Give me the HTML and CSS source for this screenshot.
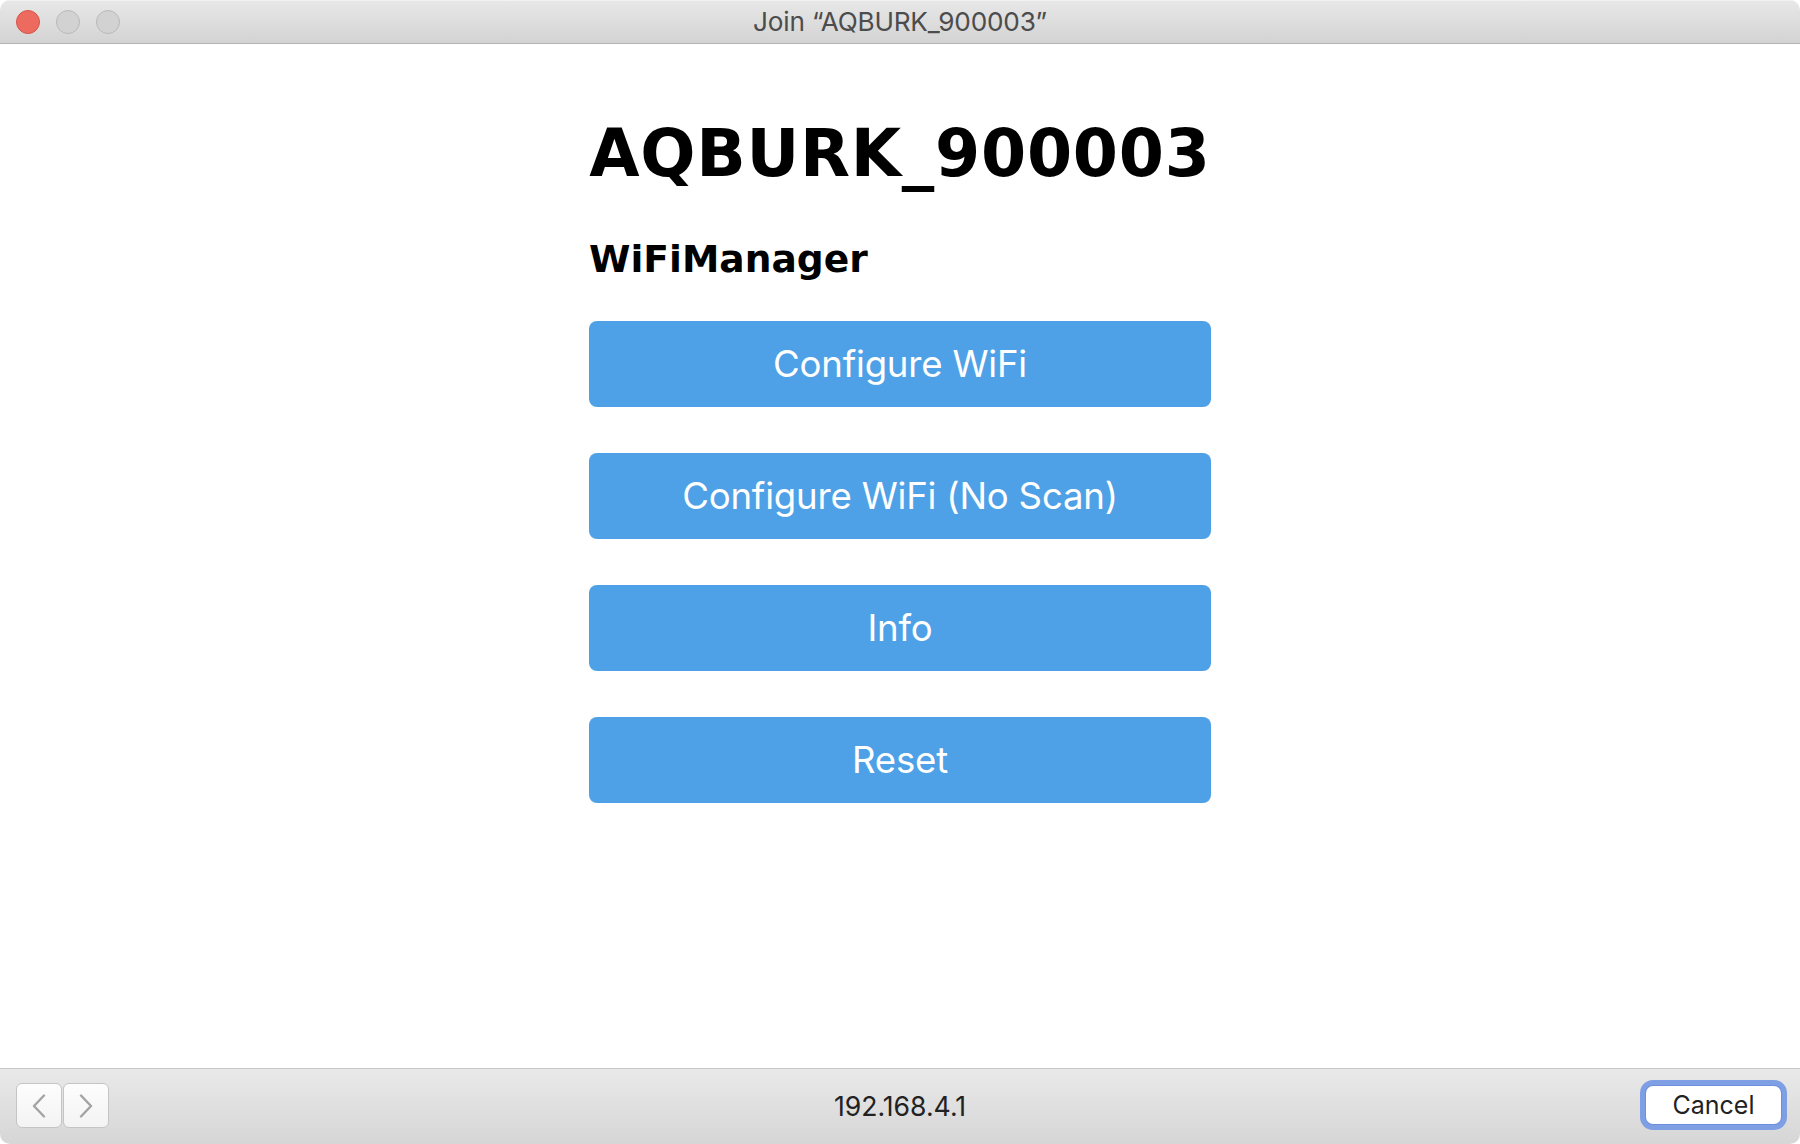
FILE: index.html
```html
<!DOCTYPE html>
<html lang="en">
<head>
<meta charset="utf-8">
<title>Join “AQBURK_900003”</title>
<link rel="stylesheet" href="styles.css">
</head>
<body>
<div class="window">
  <header class="titlebar">
    <div class="lights">
      <span class="light red"></span>
      <span class="light"></span>
      <span class="light"></span>
    </div>
    <div class="title">Join “AQBURK_900003”</div>
    <div></div>
  </header>
  <main class="content">
    <div class="wrap">
      <h1 class="ssid">AQBURK_900003</h1>
      <h3 class="sub">WiFiManager</h3>
      <div class="menu">
        <button class="btn">Configure WiFi</button>
        <button class="btn">Configure WiFi (No Scan)</button>
        <button class="btn">Info</button>
        <button class="btn">Reset</button>
      </div>
    </div>
  </main>
  <footer class="bottombar">
    <div class="nav">
      <span class="navbtn">
        <svg width="16" height="24" viewBox="0 0 16 24"><path d="M13 1.5 L3 12 L13 22.5" fill="none" stroke="#a3a3a3" stroke-width="2.4" stroke-linecap="round" stroke-linejoin="round"/></svg>
      </span>
      <span class="navbtn">
        <svg width="16" height="24" viewBox="0 0 16 24"><path d="M3 1.5 L13 12 L3 22.5" fill="none" stroke="#a3a3a3" stroke-width="2.4" stroke-linecap="round" stroke-linejoin="round"/></svg>
      </span>
    </div>
    <div class="url">192.168.4.1</div>
    <div class="actions">
      <button class="cancel">Cancel</button>
    </div>
  </footer>
</div>
</body>
</html>
```

FILE: styles.css
```css
html, body {
  margin: 0;
  padding: 0;
  background: #ffffff;
}

.window {
  width: 1800px;
  height: 1144px;
  display: flex;
  flex-direction: column;
  overflow: hidden;
  border-radius: 10px;
  background: #ffffff;
}

.titlebar {
  height: 43px;
  flex: none;
  display: grid;
  grid-template-columns: 1fr auto 1fr;
  align-items: center;
  background: linear-gradient(#e8e8e8, #d3d3d3);
  border-bottom: 1px solid #b3b3b3;
  box-shadow: inset 0 1px 0 #f2f2f2;
}

.lights {
  display: flex;
  gap: 16px;
  padding-left: 16px;
}

.light {
  width: 22px;
  height: 22px;
  border-radius: 50%;
  background: #d2d2d2;
  border: 1px solid #b9b9b9;
}

.light.red {
  background: #ec6a5e;
  border-color: #d6554a;
}

.title {
  font-family: "Inter", "Roboto", sans-serif;
  font-size: 26.2px;
  color: #4c4c4c;
  letter-spacing: -0.2px;
}

.content {
  flex: 1;
  display: flex;
  justify-content: center;
  background: #ffffff;
}

.wrap {
  width: 622px;
  padding-top: 72px;
}

.ssid {
  margin: 0;
  font-family: "DejaVu Sans", "Verdana", sans-serif;
  font-weight: bold;
  font-size: 65px;
  line-height: 76px;
  letter-spacing: 0.7px;
  text-align: center;
  color: #000000;
}

.sub {
  margin: 44px 0 0 0;
  font-family: "DejaVu Sans", "Verdana", sans-serif;
  font-weight: bold;
  font-size: 37.6px;
  line-height: 46px;
  color: #000000;
}

.menu {
  margin-top: 39px;
  display: flex;
  flex-direction: column;
  gap: 46px;
}

.btn {
  display: block;
  width: 100%;
  height: 86px;
  border: 0;
  border-radius: 8px;
  background: #4ea1e6;
  color: #ffffff;
  font-family: "Inter", "Roboto", sans-serif;
  font-size: 36.6px;
  letter-spacing: -0.2px;
  padding: 0;
}

.bottombar {
  height: 75px;
  flex: none;
  display: grid;
  grid-template-columns: 1fr auto 1fr;
  align-items: center;
  border-top: 1px solid #c6c6c6;
  background: linear-gradient(#e9e9e9, #d6d6d6);
}

.nav {
  display: flex;
  gap: 1px;
  padding-left: 16px;
  margin-top: -2px;
}

.navbtn {
  width: 44px;
  height: 43px;
  display: flex;
  align-items: center;
  justify-content: center;
  border: 1px solid #c5c5c5;
  border-radius: 6px;
  background: linear-gradient(#fdfdfd, #f3f3f3);
}

.url {
  font-family: "Inter", "Roboto", sans-serif;
  font-size: 26.6px;
  color: #222222;
  margin-top: -2px;
}

.actions {
  display: flex;
  justify-content: flex-end;
  padding-right: 19px;
  margin-top: -3px;
}

.cancel {
  width: 135px;
  height: 38px;
  border: 0;
  border-radius: 7px;
  background: #ffffff;
  box-shadow: 0 0 0 1px #6d8fdc, 0 0 0 6px #7f9fe4;
  font-family: "Inter", "Roboto", sans-serif;
  font-size: 25px;
  color: #222222;
  padding: 0;
}
```
